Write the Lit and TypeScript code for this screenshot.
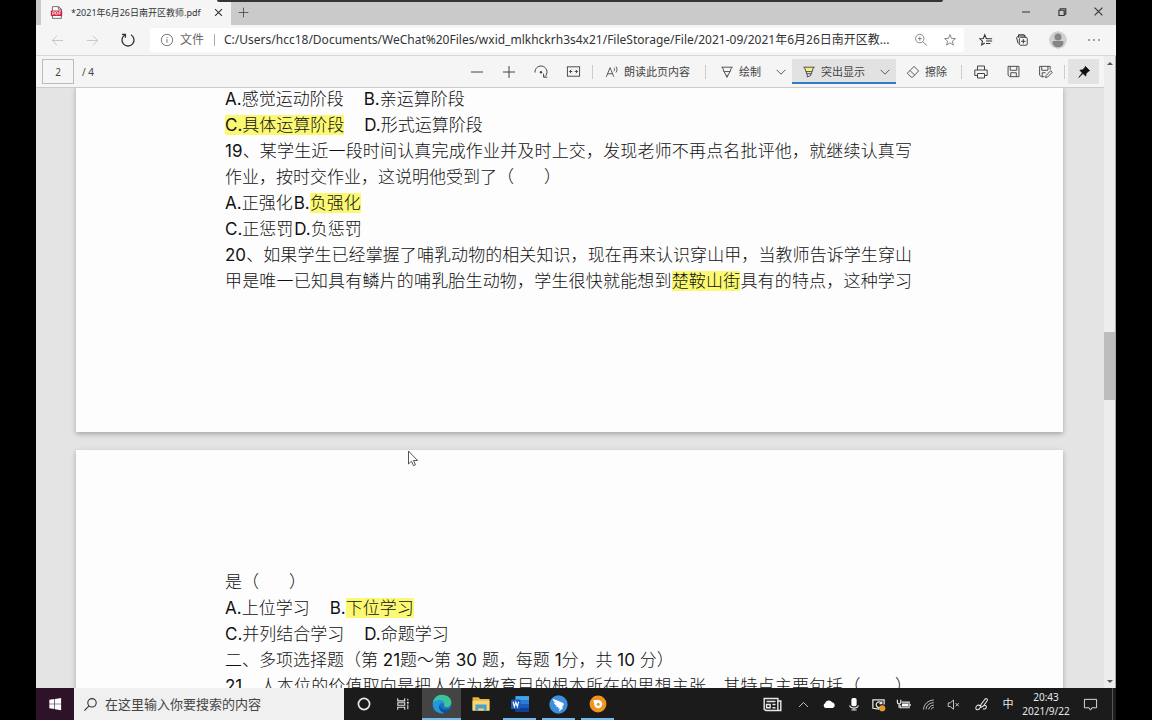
import { LitElement, html, css, svg, TemplateResult, SVGTemplateResult } from "lit";
import { customElement } from "lit/decorators.js";

const icon = (body: SVGTemplateResult, size = 16): TemplateResult => html`<svg
  class="icon"
  width=${size}
  height=${size}
  viewBox="0 0 16 16"
  fill="none"
  stroke="currentColor"
  stroke-width="1"
  aria-hidden="true"
>${body}</svg>`;

const I = {
  pdf: svg`<path d="M3 .8h7.5L14 4v11.2H3z" fill="#fff" stroke="#5a4a50"/><path d="M10.3 .8V4H14" stroke="#5a4a50"/><rect x="1" y="5.5" width="14" height="6.8" rx=".8" fill="#d0203f" stroke="none"/><path d="M3.4 11V7h1.4a1.1 1.1 0 0 1 0 2.4H3.4M7 7v3.6h.8a1.8 1.8 0 0 0 0-3.6zM11.2 11V7H13.4M11.2 9h1.8" stroke="#fff" stroke-width=".9"/>`,
  close: svg`<path d="M3 3l10 10M13 3L3 13" stroke-width="1.6"/>`,
  plus: svg`<path d="M8 2v12M2 8h12"/>`,
  minus: svg`<path d="M2 8h12"/>`,
  winMin: svg`<path d="M4 8h8"/>`,
  winMax: svg`<path d="M4.5 6h6v6h-6zM6 6V4.3h6.3v6.2h-1.8" stroke-width="1.3"/>`,
  winClose: svg`<path d="M3.8 3.8l8.4 8.4M12.2 3.8l-8.4 8.4" stroke-width="1.2"/>`,
  back: svg`<path d="M14 8H2.5M7.5 3L2.5 8l5 5"/>`,
  forward: svg`<path d="M2 8h11.5M8.5 3l5 5-5 5"/>`,
  reload: svg`<path d="M5 2.8a6 6 0 1 0 6 0M2 2.4h3.4v3.4" stroke-width="1.3"/>`,
  info: svg`<circle cx="8" cy="8" r="6.5"/><path d="M8 7v4.2M8 4.6v1.3"/>`,
  zoom: svg`<circle cx="6.6" cy="6.4" r="4.8"/><path d="M10 10l5 4.6M4.4 6.4h4.4M6.6 4.2v4.4"/>`,
  star: svg`<path d="M8 1.8l1.7 4.3 4.5.3-3.5 2.9 1.2 4.5L8 11.3l-3.900 2.500 1.200-4.500-3.500-2.900 4.500-.3z"/>`,
  favs: svg`<path d="M9.400 6.300H8.300L6.600 2 5 6.300.8 6.600 4 9.400l-1 4.300 3.600-2.300M8.500 6.500H15M8 9.200h7M8 12h5" stroke-width="1.200"/>`,
  collections: svg`<rect x="5" y="5" width="9" height="9" rx="1.5"/><path d="M9.500 7v5M7 9.500h5M3.600 12L1.800 5.200 4 3.400h8M4 5.200V2h6.500l1.200 3" stroke-width="1.100"/>`,
  more: svg`<path d="M3 8h.01M8 8h.01M13 8h.01" stroke-width="1.6" stroke-linecap="round"/>`,
  rotate: svg`<path d="M2 8.500a6 6 0 1 1 9.800 4.100M14.200 13.200h-3.600V9.700"/><circle cx="8" cy="8.300" r="1.200" fill="currentColor" stroke="none"/>`,
  fit: svg`<rect x="1.500" y="3" width="13" height="10"/><path d="M3.700 8h3M9.300 8h3M5.500 6.300L3.700 8l1.800 1.700M10.500 6.300L12.300 8l-1.800 1.700"/>`,
  read: svg`<path d="M1.500 13.500L5.800 3l4.300 10.500M3 10h5.600M10.200 3.200c1 1 1 3 0 4M12.500 1.800c1.600 1.800 1.600 5 0 6.800"/>`,
  pen: svg`<path d="M1.500 2.500h13M3 2.500l1.300 5h7.400l1.300-5M4.600 7.500L8 14l3.400-6.500M8 14v-3"/>`,
  marker: svg`<path d="M2.500 2.500h11L11.600 7.500H4.400z" fill="#f5ef7a" stroke="none"/><path d="M1.500 2.500h13M3 2.500l1.300 5h7.400l1.300-5M5 7.500V10h6V7.500M6 10v3.800l4-1.800v-2"/>`,
  chevron: svg`<path d="M3 5.500l5 5 5-5"/>`,
  eraser: svg`<path d="M1.500 9.300L9.200 1.600l5.200 5.200L7.600 13.900H6zM4.600 6.300l5.300 5.300"/>`,
  print: svg`<path d="M4.500 6V2h7v4M4.500 11.500H1.800V6h12.400v5.500h-2.700M4.500 9.500h7V14h-7z"/>`,
  save: svg`<path d="M2.200 2.500h11.600v11H4L2.200 12zM4.500 2.700v4h7v-4M5 13.300v-4h6v4"/>`,
  saveAs: svg`<path d="M7 13.500H3.500L1.700 12V2.500H13V6M4 2.700v4h6.600v-4M4.500 13.300v-4H8M8.200 14.500l.5-2.300 4.800-5 1.700 1.700-5 5z"/>`,
  pin: svg`<path d="M9.500 1.500l5 5-1.500.7-2.500 2.500-.5 3L6.800 9.700 2 14.300l4-5.300L3.300 6l3-.5L9 3z" fill="currentColor" stroke-width=".8"/>`,
  windows: svg`<path d="M1.500 3.200l5.800-.9v5.300H1.500zM8 2.200L15 1v6.600H8zM1.500 8.300h5.800v5.400l-5.800-.9zM8 8.300h7V15l-7-1.100z" fill="#fff" stroke="none"/>`,
  search: svg`<circle cx="9.600" cy="6.200" r="4.500" stroke-width="1.200"/><path d="M6.400 9.400L1.500 14.500" stroke-width="1.200"/>`,
  cortana: svg`<circle cx="8" cy="8" r="5.600" stroke-width="1.700"/>`,
  taskview: svg`<path d="M2 1.500v2.900h8V1.500M2 14.500v-2.900h8v2.900M2 6.500h8v3H2zM13.500 2v2M13.500 8.500V14" stroke-width="1.200"/><path d="M12.500 5.500h2v2h-2z" fill="currentColor" stroke="none"/>`,
  edge: svg`<circle cx="8" cy="8" r="7.500" fill="#1573c4" stroke="none"/><path d="M.6 7.200C1.200 3 4.300.5 8 .5c4.300 0 7.500 2.900 7.500 6.200 0 2.300-1.700 3.800-3.700 3.800-1.800 0-2.500-.8-2.200-1.500.8-1.700-.4-3.800-3-3.800-3 0-5.100 1-6 2z" fill="#3bc49b" stroke="none"/><path d="M.6 7.200C2 5.400 4.200 4.800 6.400 5c2.200.2 3.500 1.600 3.300 3.300-.6-1-3.200-1.400-4 .8-.7 2.200 1 5 4.300 6.100C4.500 16.500.1 12.600.6 7.200z" fill="#2297db" stroke="none"/><path d="M5.700 9.100c-.6 2.300 1.200 5.200 4.400 6.100 2-.5 3.500-1.700 4.500-3.500-3.600 1.800-7.400.8-8.900-2.600z" fill="#124e93" stroke="none"/>`,
  folder: svg`<path d="M.5 2h5.300l1.400 1.500h8.300v10H.5z" fill="#e5b53f" stroke="none"/><path d="M.5 5h15v9H.5z" fill="#f7d774" stroke="none"/><path d="M3 8.500h10V14h-2.500v-2h-5v2H3z" fill="#4c9fce" stroke="none"/>`,
  word: svg`<rect x="4" y="1" width="12" height="14" rx="1" fill="#1b5cbe" stroke="none"/><path d="M4 1h12v3.500H4z" fill="#41a5ee" stroke="none"/><path d="M4 4.500h12V8H4z" fill="#2b7cd3" stroke="none"/><path d="M4 11.500h12V15H4z" fill="#103f91" stroke="none"/><rect x="0" y="4" width="8.500" height="8.500" rx=".8" fill="#185abd" stroke="none"/><path d="M1.800 6l1.200 4.400L4.300 6.300l1.300 4.100L6.800 6" stroke="#fff"/>`,
  bird: svg`<circle cx="8" cy="8" r="7.700" fill="#3c8ee0" stroke="none"/><path d="M3 3.200c3 1 6 2.200 8.800 3.600.8.400.8 1 .4 1.700l-1.300 2.200h1.200L8.300 14l.8-2.700H7.500l.6-1.200c-1.300 0-2.200-.3-2.700-1.100l1.400-.2C5.200 8.200 4.300 7.400 4 6.300l1.500.3C4 5.500 3.200 4.500 3 3.200z" fill="#fff" stroke="none"/>`,
  recorder: svg`<circle cx="8" cy="8" r="7.500" fill="#ef9420" stroke="none"/><path d="M3.800 4.500H8A3.600 3.600 0 1 1 4.600 8z" fill="#fff" stroke="none"/><circle cx="8.200" cy="8.200" r="1.400" fill="#ef9420" stroke="none"/>`,
  news: svg`<path d="M1 3h11.500v10H2.500L1 12zM12.500 5H15v8h-3M3 5.500h7.500M3 8h3v2.800H3zM8 8h2.500M8 10.800h2.500" stroke-width="1.200"/>`,
  caret: svg`<path d="M2.500 11L8 5.500l5.500 5.500"/>`,
  cloud: svg`<path d="M4 12.500A3 3 0 0 1 3.500 7a4.500 4.500 0 0 1 8-1 3.400 3.400 0 0 1 1 6.500z" fill="#fff" stroke="none"/>`,
  mic: svg`<rect x="5" y="1" width="6" height="9.500" rx="2" fill="#fff" stroke="none"/><path d="M3 9.500c.5 4 9.500 4 10 0M8 12.500V15M5 14.800h6" stroke-width="1.200"/>`,
  update: svg`<path d="M9 13L2 12V3h12v5M11 6.500a3 3 0 1 0 0 3.500M11.500 4.500V7H9" stroke-width="1.300"/><circle cx="12" cy="12" r="3.300" fill="#e69a28" stroke="none"/>`,
  battery: svg`<path d="M6 5.500h8v6H4.500v-3" stroke-width="1.200"/><path d="M6.500 7h6.500v3H6z" fill="#fff" stroke="none"/><path d="M1.500 3v2.500a1.800 1.800 0 0 0 3.600 0V3M3.300 7.500v4M15 7.500v2" stroke-width="1.300"/>`,
  wifi: svg`<path d="M1.800 14C2.500 7.500 7.500 2.800 14.500 2.500M5 14c.4-4.700 4-8 9.500-8.300M8.200 14c.3-2.700 2.700-5 6.300-5.200M11.500 14c.2-1.300 1.300-2.300 3-2.400"/>`,
  mute: svg`<path d="M1.500 6v4.500H4l4 3.300V2.500L4 6zM10.500 6.200l4 4M14.500 6.200l-4 4"/>`,
  ink: svg`<path d="M6.500 11.500l1-3.500L12 2c1-1 3 .3 2.200 1.700L10 9.600zM7 9.500c-3-2.200-5.500.5-5 2.800.4 2 3.600 1.500 4-.5M10 9c2-.5 4 .6 3 2.600-.7 1.200-2.500 1.600-3.500.8" stroke-width="1.100"/>`,
  note: svg`<path d="M1.500 2.500h13v9h-5L8 14l-1.500-2.500h-5z"/>`,
};

@customElement("app-root")
export class AppRoot extends LitElement {
  static styles = css`
    :host {
      display: flex;
      flex-direction: column;
      height: 100vh;
      box-sizing: border-box;
      padding: 0 36px;
      overflow: hidden;
      position: relative;
      background: #000;
      color: #444;
      font: 11px/16px "Noto Sans", "Noto Sans CJK SC", sans-serif;
    }
    * { box-sizing: border-box; }
    button, input {
      font: inherit;
      color: inherit;
      border: 0;
      background: none;
      padding: 0;
      margin: 0;
      border-radius: 0;
    }
    button {
      display: flex;
      align-items: center;
      justify-content: center;
      flex: none;
      white-space: nowrap;
    }
    .icon { display: block; flex: none; }

    .share-bar {
      position: absolute;
      top: 0;
      left: 217px;
      right: 209px;
      height: 2px;
      background: #35343a;
      border-radius: 0 0 3px 3px;
    }
    .tabs {
      display: flex;
      flex: none;
      height: 25px;
      padding-left: 5px;
      background: #cacaca;
    }
    .tab {
      display: flex;
      align-items: center;
      width: 190px;
      padding: 0 5px 0 9px;
      gap: 8px;
      background: #f5f5f6;
      color: #333;
      font-size: 9px;
    }
    .tab-title { flex: 1; white-space: nowrap; }
    .tab-close { width: 16px; }
    .new-tab { width: 25px; }
    .win { display: flex; margin-left: auto; }
    .win button { width: 36px; height: 23px; color: #333; }

    .address {
      display: flex;
      align-items: center;
      flex: none;
      height: 31px;
      padding: 0 4px;
      background: #f5f5f6;
      border-bottom: 1px solid #d8d8d8;
    }
    .nav { width: 35px; height: 28px; color: #333; }
    .nav:disabled { color: #c4c4c4; }
    .url {
      display: flex;
      align-items: center;
      flex: 1;
      min-width: 0;
      height: 24px;
      margin: 0 4px 0 5px;
      padding: 0 0 0 10px;
      background: #fff;
      border-radius: 3px;
      color: #666;
      font-size: 12px;
    }
    .scheme { margin-left: 6px; }
    .bar { width: 1px; height: 12px; margin: 0 9px 0 10px; background: #aaa; }
    .url input { flex: 1; min-width: 0; color: #333; text-overflow: ellipsis; }
    .url button { width: 29px; color: #777; }
    .chrome { width: 36px; height: 28px; color: #333; }
    .avatar { display: block; border-radius: 50%; }

    .main { display: flex; flex: 1; min-height: 0; background: #ededed; }
    .reader { display: flex; flex-direction: column; flex: 1; min-width: 0; }
    .tools {
      display: flex;
      align-items: center;
      flex: none;
      height: 32px;
      padding: 0 5px 0 6px;
      background: #f5f5f5;
      border-bottom: 1px solid #ccc;
    }
    .page-no {
      width: 32px;
      height: 25px;
      border: 1px solid #bbb;
      text-align: center;
      font-size: 10px;
    }
    .page-count { margin: 0 auto 0 8px; font-size: 10px; }
    .tool { width: 32px; height: 25px; }
    .labelled { gap: 5px; height: 25px; padding: 0 9px 0 6px; }
    .read { width: 103px; padding: 0 6px; }
    .erase { padding: 0 11px 0 6px; }
    .caret { width: 22px; height: 25px; }
    .sep { width: 1px; height: 14px; margin: 0 3px; background: #ccc; }
    .wide { margin: 0 8px 0 6px; }
    .split { display: flex; }
    .split.on {
      margin: 0 4px 0 0;
      background: #e2e2e2;
      box-shadow: inset 0 -2px #2f7cc4;
    }
    .split.on .labelled { padding-left: 10px; }
    .pin { width: 31px; background: #e3e3e3; color: #111; }

    .viewer {
      flex: 1;
      min-height: 0;
      overflow: hidden;
      padding: 0 41px 0 40px;
      background: #e4e4e4;
    }
    .sheet {
      margin-bottom: 18px;
      padding: 0 151px 0 149px;
      background: #fdfdfd;
      box-shadow: 0 2px 5px rgba(0, 0, 0, 0.28);
      color: #111;
      font: 300 17px/26px Inter, "Noto Sans CJK SC", sans-serif;
    }
    .sheet.current { margin-top: -2px; padding-bottom: 138px; }
    .sheet.next { padding-top: 119px; margin-bottom: 0; }
    .row { margin: 0; height: 26px; white-space: nowrap; }
    .full { text-align: justify; text-align-last: justify; white-space: normal; }
    .opts { display: flex; gap: 20px; }
    .tight { gap: 1px; }
    .blank { display: inline-block; width: 30px; }
    b { font-weight: 400; }
    mark { background: #fbf873; color: inherit; }

    .scroll {
      display: flex;
      flex-direction: column;
      width: 12px;
      align-items: center;
      background: #ededed;
      border-right: 1px solid #aaa;
    }
    .arrow { width: 12px; height: 14px; color: #555; }
    .track { display: flex; flex-direction: column; flex: 1; width: 100%; }
    .before { flex: 262; }
    .thumb { flex: 68; background: #bdbdbd; }
    .after { flex: 274; }

    .pointer { position: absolute; left: 407px; top: 450px; }

    .taskbar {
      display: flex;
      flex: none;
      height: 32px;
      background: #1b1b1b;
      color: #e8e8e8;
    }
    .start { width: 38px; background: #2e1228; }
    .find {
      display: flex;
      align-items: center;
      gap: 7px;
      width: 270px;
      padding: 0 9px;
      background: #f0f0f0;
      color: #333;
      font-size: 13px;
    }
    .find input { flex: 1; min-width: 0; }
    .find input::placeholder { color: #444; opacity: 1; }
    .apps { display: flex; }
    .app { width: 39px; height: 32px; position: relative; }
    .app.active { background: #444; }
    .app.running::after {
      content: "";
      position: absolute;
      left: 3px;
      right: 3px;
      bottom: 0;
      height: 2px;
      background: #76b9ed;
    }
    .app.active::after { left: 0; right: 0; }
    .tray {
      display: flex;
      margin: 0 3px 0 auto;
      padding-right: 5px;
      border-right: 1px solid #555;
    }
    .tray button { width: 25px; height: 32px; }
    .tray .news { width: 38px; }
    .tray .ink { width: 31px; }
    .tray .ime { width: 22px; }
    .tray .clock { width: 54px; flex-direction: column; font-size: 10px; line-height: 14px; }
    .tray .note { width: 34px; }
  `;

  private tool(label: string, body: SVGTemplateResult, cls = "tool", size = 16) {
    return html`<button class=${cls} aria-label=${label}>${icon(body, size)}</button>`;
  }

  private labelled(label: string, body: SVGTemplateResult, cls = "") {
    return html`<button class="labelled ${cls}">${icon(body, 14)}<span>${label}</span></button>`;
  }

  render() {
    return html`
      <header class="tabs">
        <div class="tab">
          ${icon(I.pdf, 13)}
          <span class="tab-title">*2021年6月26日南开区教师.pdf</span>
          ${this.tool("关闭标签页", I.close, "tab-close", 11)}
        </div>
        ${this.tool("新建标签页", I.plus, "new-tab", 13)}
        <div class="win">
          ${this.tool("最小化", I.winMin, "")}
          ${this.tool("还原", I.winMax, "", 14)}
          ${this.tool("关闭", I.winClose, "", 15)}
        </div>
      </header>
      <nav class="address">
        <button class="nav" disabled aria-label="后退">${icon(I.back, 15)}</button>
        <button class="nav" disabled aria-label="前进">${icon(I.forward, 15)}</button>
        ${this.tool("刷新", I.reload, "nav", 16)}
        <div class="url">
          ${icon(I.info, 14)}
          <label class="scheme" for="url">文件</label>
          <span class="bar"></span>
          <input id="url" value="C:/Users/hcc18/Documents/WeChat%20Files/wxid_mlkhckrh3s4x21/FileStorage/File/2021-09/2021年6月26日南开区教..." />
          ${this.tool("缩放", I.zoom, "", 14)}
          ${this.tool("收藏", I.star, "", 14)}
        </div>
        ${this.tool("收藏夹", I.favs, "chrome", 14)}
        ${this.tool("集锦", I.collections, "chrome", 14)}
        <button class="chrome" aria-label="用户">
          <svg class="avatar" width="18" height="18" viewBox="0 0 18 18">
            <circle cx="9" cy="9" r="9" fill="#d3cfcd" />
            <circle cx="9" cy="6" r="3.5" fill="#858585" />
            <path d="M3.500 11.500c0-1 .5-1.500 1.500-1.500h8c1 0 1.500.5 1.500 1.500 0 3-2.500 4.800-5.500 4.800s-5.500-1.800-5.500-4.800z" fill="#858585" />
          </svg>
        </button>
        ${this.tool("更多", I.more, "chrome", 16)}
      </nav>
      <main class="main">
        <section class="reader">
          <div class="tools">
            <input class="page-no" value="2" aria-label="页码" />
            <span class="page-count">/ 4</span>
            ${this.tool("缩小", I.minus)} ${this.tool("放大", I.plus)}
            ${this.tool("旋转", I.rotate)} ${this.tool("适应宽度", I.fit, "tool", 15)}
            <span class="sep"></span>
            ${this.labelled("朗读此页内容", I.read, "read")}
            <span class="sep wide"></span>
            <div class="split">
              ${this.labelled("绘制", I.pen)} ${this.tool("绘制选项", I.chevron, "caret", 14)}
            </div>
            <div class="split on">
              ${this.labelled("突出显示", I.marker)} ${this.tool("突出显示选项", I.chevron, "caret", 14)}
            </div>
            ${this.labelled("擦除", I.eraser, "erase")}
            <span class="sep"></span>
            ${this.tool("打印", I.print, "tool", 16)} ${this.tool("保存", I.save, "tool", 15)}
            ${this.tool("另存为", I.saveAs, "tool", 15)}
            <span class="sep"></span>
            ${this.tool("固定工具栏", I.pin, "tool pin", 14)}
          </div>
          <div class="viewer">
            <article class="sheet current">
              <p class="row opts"><span><b>A.</b>感觉运动阶段</span><span><b>B.</b>亲运算阶段</span></p>
              <p class="row opts"><span><mark><b>C.</b>具体运算阶段</mark></span><span><b>D.</b>形式运算阶段</span></p>
              <p class="row full"><b>19</b>、某学生近一段时间认真完成作业并及时上交，发现老师不再点名批评他，就继续认真写</p>
              <p class="row">作业，按时交作业，这说明他受到了（<span class="blank"></span>）</p>
              <p class="row opts tight"><span><b>A.</b>正强化</span><span><b>B.</b><mark>负强化</mark></span></p>
              <p class="row opts tight"><span><b>C.</b>正惩罚</span><span><b>D.</b>负惩罚</span></p>
              <p class="row full"><b>20</b>、如果学生已经掌握了哺乳动物的相关知识，现在再来认识穿山甲，当教师告诉学生穿山</p>
              <p class="row full">甲是唯一已知具有鳞片的哺乳胎生动物，学生很快就能想到<mark>楚鞍山街</mark>具有的特点，这种学习</p>
            </article>
            <article class="sheet next">
              <p class="row">是（<span class="blank"></span>）</p>
              <p class="row opts"><span><b>A.</b>上位学习</span><span><b>B.</b><mark>下位学习</mark></span></p>
              <p class="row opts"><span><b>C.</b>并列结合学习</span><span><b>D.</b>命题学习</span></p>
              <p class="row">二、多项选择题（第 <b>21</b>题～第 <b>30</b> 题，每题 <b>1</b>分，共 <b>10</b> 分）</p>
              <p class="row full"><b>21</b>、人本位的价值取向是把人作为教育目的根本所在的思想主张，其特点主要包括（　　）</p>
            </article>
          </div>
        </section>
        <div class="scroll">
          <svg class="arrow" viewBox="0 0 12 14"><path d="M3 9l3-3 3 3z" fill="currentColor" /></svg>
          <div class="track">
            <span class="before"></span><span class="thumb"></span><span class="after"></span>
          </div>
          <svg class="arrow" viewBox="0 0 12 14"><path d="M3 6l3 3 3-3z" fill="currentColor" /></svg>
        </div>
      </main>
      <footer class="taskbar">
        ${this.tool("开始", I.windows, "start", 14)}
        <label class="find">${icon(I.search, 15)}<input placeholder="在这里输入你要搜索的内容" aria-label="搜索" /></label>
        <div class="apps">
          ${this.tool("Cortana", I.cortana, "app", 16)}
          ${this.tool("任务视图", I.taskview, "app", 14)}
          ${this.tool("Edge", I.edge, "app running active", 20)}
          ${this.tool("文件资源管理器", I.folder, "app", 18)}
          ${this.tool("Word", I.word, "app running", 18)}
          ${this.tool("钉钉", I.bird, "app running", 19)}
          ${this.tool("录屏", I.recorder, "app running", 18)}
        </div>
        <div class="tray">
          ${this.tool("资讯", I.news, "news", 19)}
          ${this.tool("显示隐藏的图标", I.caret, "", 13)}
          ${this.tool("OneDrive", I.cloud, "", 14)}
          ${this.tool("麦克风", I.mic, "", 14)}
          ${this.tool("更新", I.update, "", 15)}
          ${this.tool("电池", I.battery, "", 15)}
          ${this.tool("网络", I.wifi, "", 13)}
          ${this.tool("音量", I.mute, "", 13)}
          ${this.tool("Ink 工作区", I.ink, "ink", 15)}
          <button class="ime">中</button>
          <button class="clock"><span>20:43</span><span>2021/9/22</span></button>
          ${this.tool("通知", I.note, "note", 15)}
        </div>
      </footer>
      <div class="share-bar"></div>
      <svg class="pointer" width="12" height="18" viewBox="0 0 12 18">
        <path d="M1.500 1v13l3-2.800 2 4.500 2-.9-2-4.300h4z" fill="#fff" stroke="#555" />
      </svg>
    `;
  }
}
